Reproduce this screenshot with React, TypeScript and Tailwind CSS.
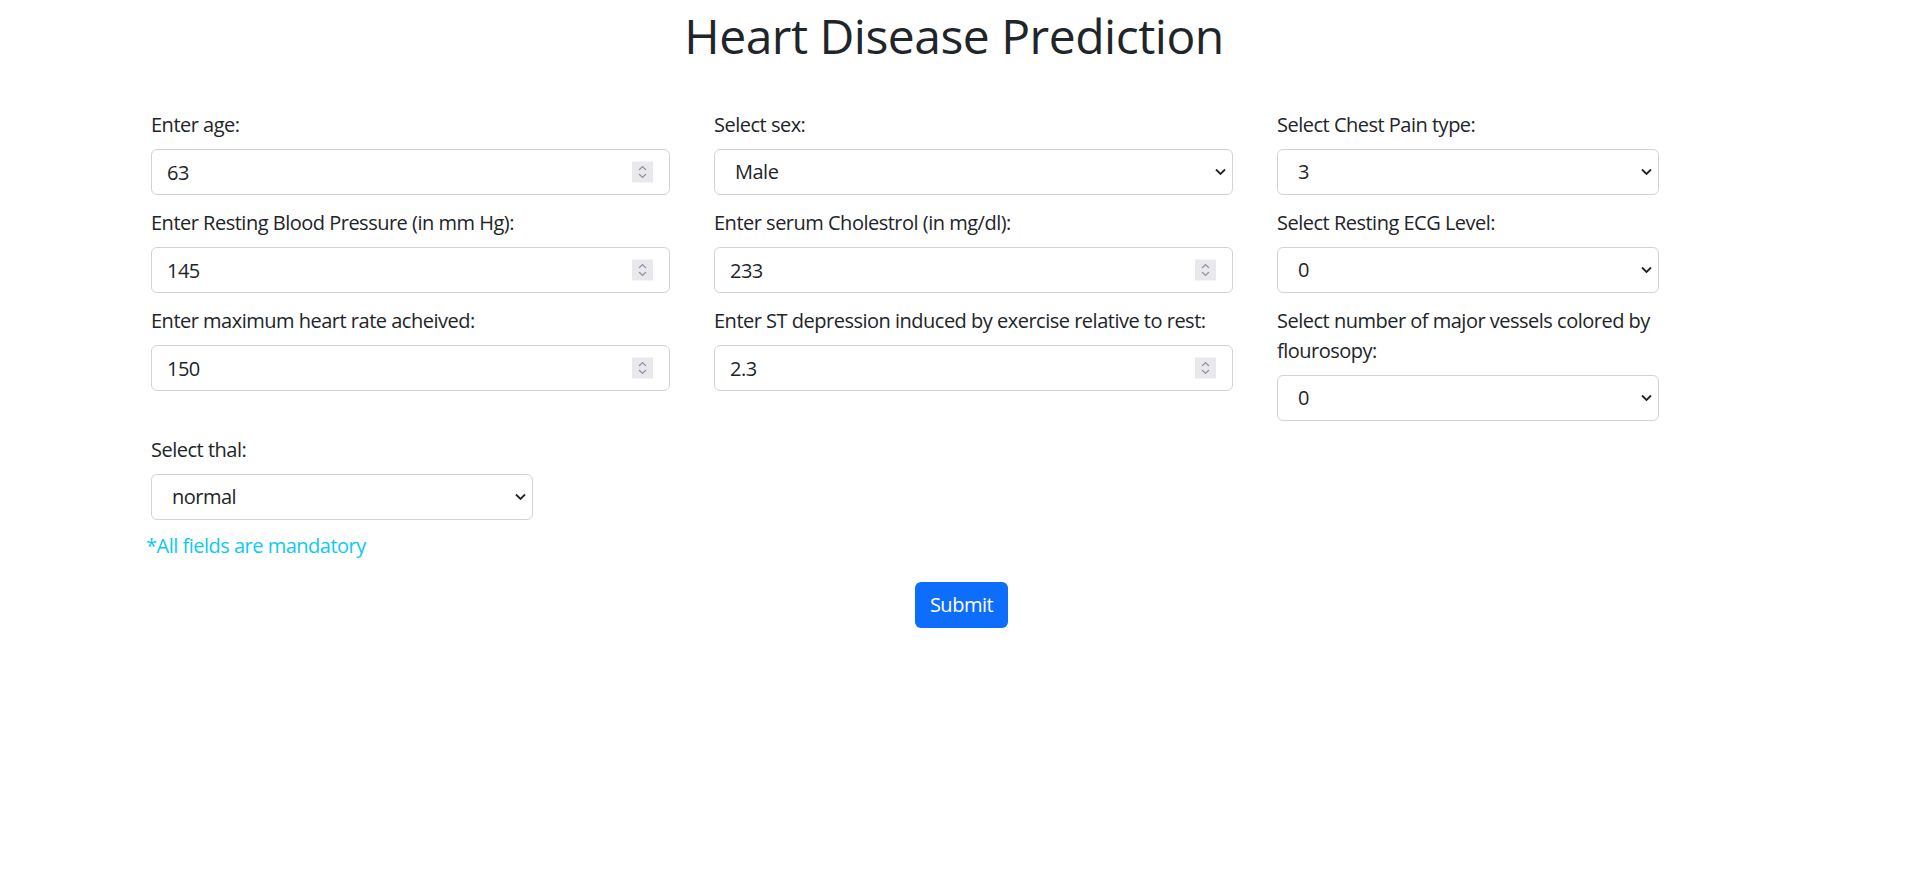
import { useState } from 'react';

const font = { fontFamily: '"Open Sans", "Noto Sans", sans-serif' };

const Chevron = () => (
  <svg
    className="pointer-events-none absolute right-[7px] top-1/2 -translate-y-1/2"
    width="11"
    height="7"
    viewBox="0 0 11 7"
    fill="none"
  >
    <path d="M1 1l4.5 4.5L10 1" stroke="#212529" strokeWidth="1.8" />
  </svg>
);

const Spinner = () => (
  <div className="pointer-events-none absolute right-[17px] top-1/2 flex h-[21px] w-[21px] -translate-y-1/2 flex-col items-center justify-center gap-[3px] bg-[#e9e9ed]">
    <svg width="9" height="5" viewBox="0 0 9 5" fill="none">
      <path d="M1 4.5L4.5 1 8 4.5" stroke="#8f8f9d" strokeWidth="1.2" />
    </svg>
    <svg width="9" height="5" viewBox="0 0 9 5" fill="none">
      <path d="M1 .5L4.5 4 8 .5" stroke="#8f8f9d" strokeWidth="1.2" />
    </svg>
  </div>
);

const NumberField = ({ label, value }: { label: string; value: string }) => {
  const [v, setV] = useState(value);
  return (
    <div className="flex flex-col">
      <label className="mb-[9px] text-[20px] leading-[30px] tracking-[-0.5px]">{label}</label>
      <div className="relative">
        <input
          type="text"
          value={v}
          onChange={(e) => setV(e.target.value)}
          className="h-[46px] w-full rounded-[6px] border border-[#ced4da] px-[15px] text-[20px] leading-[30px] tracking-[-0.5px] text-[#212529] outline-none"
        />
        <Spinner />
      </div>
    </div>
  );
};

const SelectField = ({ label, options }: { label: string; options: string[] }) => (
  <div className="flex flex-col">
    <label className="mb-[9px] text-[20px] leading-[30px] tracking-[-0.5px]">{label}</label>
    <div className="relative">
      <select className="h-[46px] w-full appearance-none rounded-[6px] border border-[#ced4da] bg-white pl-[20px] pr-[30px] text-[20px] leading-[30px] tracking-[-0.5px] text-[#212529] outline-none">
        {options.map((o) => (
          <option key={o}>{o}</option>
        ))}
      </select>
      <Chevron />
    </div>
  </div>
);

export default function App() {
  return (
    <div className="min-h-screen bg-white pb-10 text-[#212529]" style={font}>
      <h1 className="pt-[6px] text-center text-[48px] font-normal leading-[60px] tracking-[-0.5px]">
        Heart Disease Prediction
      </h1>

      <form className="mt-[44px] pl-[151px]" onSubmit={(e) => e.preventDefault()}>
        <div className="grid grid-cols-[519px_519px_382px] items-start gap-x-[44px] gap-y-[13px]">
          <NumberField label="Enter age:" value="63" />
          <SelectField label="Select sex:" options={['Male', 'Female']} />
          <SelectField label="Select Chest Pain type:" options={['3', '0', '1', '2']} />

          <NumberField label="Enter Resting Blood Pressure (in mm Hg):" value="145" />
          <NumberField label="Enter serum Cholestrol (in mg/dl):" value="233" />
          <SelectField label="Select Resting ECG Level:" options={['0', '1', '2']} />

          <NumberField label="Enter maximum heart rate acheived:" value="150" />
          <NumberField label="Enter ST depression induced by exercise relative to rest:" value="2.3" />
          <SelectField
            label="Select number of major vessels colored by flourosopy:"
            options={['0', '1', '2', '3']}
          />

          <div className="mt-[1px] w-[382px]">
            <SelectField label="Select thal:" options={['normal', 'fixed defect', 'reversable defect']} />
          </div>
        </div>
        <p className="mt-[11px] ml-[-5px] text-[20px] leading-[30px] tracking-[-0.5px] text-[#0dcaf0]">
          *All fields are mandatory
        </p>
      </form>

      <div className="mt-[21px] flex justify-center pl-[15px]">
        <button
          type="button"
          className="h-[46px] rounded-[6px] bg-[#0d6efd] px-[15px] text-[20px] leading-[30px] tracking-[-0.5px] text-white"
        >
          Submit
        </button>
      </div>
    </div>
  );
}
